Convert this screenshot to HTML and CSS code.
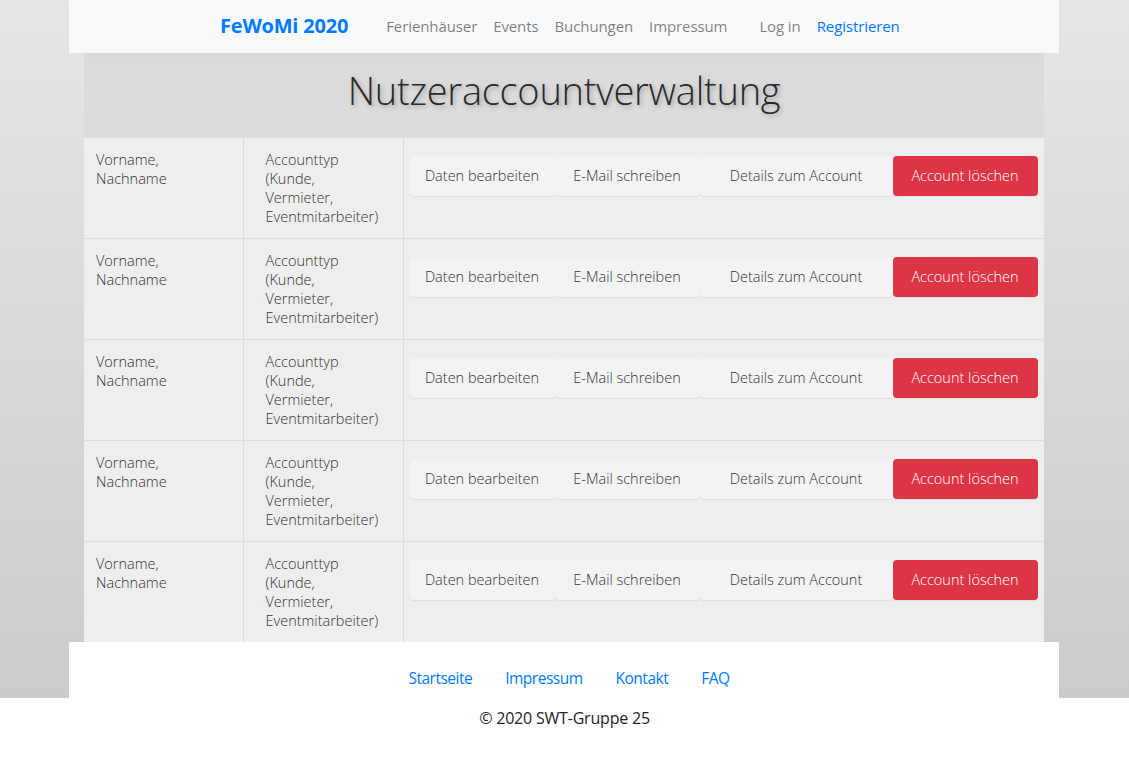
FILE: index.html
```html
<!DOCTYPE html>
<html lang="de">
<head>
<meta charset="utf-8">
<title>Nutzeraccountverwaltung</title>
<link rel="stylesheet" href="styles.css">
</head>
<body>
<div class="page">
  <nav class="navbar">
    <a class="brand" href="#">FeWoMi 2020</a>
    <ul class="nav-main">
      <li><a href="#">Ferienhäuser</a></li>
      <li><a href="#">Events</a></li>
      <li><a href="#">Buchungen</a></li>
      <li><a href="#">Impressum</a></li>
    </ul>
    <ul class="nav-user">
      <li><a href="#">Log in</a></li>
      <li><a class="active" href="#">Registrieren</a></li>
    </ul>
  </nav>
  <main class="container">
    <header class="jumbo"><h1>Nutzeraccountverwaltung</h1></header>
    <table class="accounts">
      <colgroup><col class="c-name"><col class="c-type"><col class="c-actions"></colgroup>
      <tbody>
        <tr>
          <td class="name">Vorname,<br>Nachname</td>
          <td class="type">Accounttyp<br>(Kunde,<br>Vermieter,<br>Eventmitarbeiter)</td>
          <td class="actions"><div class="btns"><button class="btn">Daten bearbeiten</button><button class="btn">E-Mail schreiben</button><button class="btn">Details zum Account</button><button class="btn danger">Account löschen</button></div></td>
        </tr>
        <tr>
          <td class="name">Vorname,<br>Nachname</td>
          <td class="type">Accounttyp<br>(Kunde,<br>Vermieter,<br>Eventmitarbeiter)</td>
          <td class="actions"><div class="btns"><button class="btn">Daten bearbeiten</button><button class="btn">E-Mail schreiben</button><button class="btn">Details zum Account</button><button class="btn danger">Account löschen</button></div></td>
        </tr>
        <tr>
          <td class="name">Vorname,<br>Nachname</td>
          <td class="type">Accounttyp<br>(Kunde,<br>Vermieter,<br>Eventmitarbeiter)</td>
          <td class="actions"><div class="btns"><button class="btn">Daten bearbeiten</button><button class="btn">E-Mail schreiben</button><button class="btn">Details zum Account</button><button class="btn danger">Account löschen</button></div></td>
        </tr>
        <tr>
          <td class="name">Vorname,<br>Nachname</td>
          <td class="type">Accounttyp<br>(Kunde,<br>Vermieter,<br>Eventmitarbeiter)</td>
          <td class="actions"><div class="btns"><button class="btn">Daten bearbeiten</button><button class="btn">E-Mail schreiben</button><button class="btn">Details zum Account</button><button class="btn danger">Account löschen</button></div></td>
        </tr>
        <tr>
          <td class="name">Vorname,<br>Nachname</td>
          <td class="type">Accounttyp<br>(Kunde,<br>Vermieter,<br>Eventmitarbeiter)</td>
          <td class="actions"><div class="btns"><button class="btn">Daten bearbeiten</button><button class="btn">E-Mail schreiben</button><button class="btn">Details zum Account</button><button class="btn danger">Account löschen</button></div></td>
        </tr>
      </tbody>
    </table>
  </main>
  <footer class="footer">
    <a href="#">Startseite</a>
    <a href="#">Impressum</a>
    <a href="#">Kontakt</a>
    <a href="#">FAQ</a>
  </footer>
</div>
<p class="copyright">© 2020 SWT-Gruppe 25</p>
</body>
</html>
```
FILE: styles.css
```css
* { box-sizing: border-box; }
html, body { margin: 0; padding: 0; background: #ffffff; }
body {
  font-family: "Open Sans", "Noto Sans", sans-serif;
  color: #212529;
}
a { text-decoration: none; }

.page {
  background: linear-gradient(180deg, #e6e6e6 0%, #cbcbcb 100%);
  padding-right: 1px;
}

/* navbar */
.navbar {
  width: 990px;
  height: 53px;
  margin: 0 auto;
  background: #f8f9fa;
  display: flex;
  align-items: center;
  padding-left: 151px;
  padding-bottom: 2px;
}
.brand {
  font-weight: 700;
  font-size: 20px;
  color: #007bff;
  margin-right: 30px;
  letter-spacing: -0.2px;
}
.navbar ul {
  list-style: none;
  margin: 0;
  padding: 0;
  display: flex;
}
.navbar li a {
  display: block;
  padding: 0 8px;
  font-size: 15px;
  font-weight: 400;
  letter-spacing: -0.1px;
  color: rgba(0, 0, 0, 0.5);
}
.navbar .nav-user { margin-left: 16px; }
.navbar li a.active { color: #007bff; }

/* content */
.container {
  width: 960px;
  margin: 0 auto;
}
.jumbo {
  height: 84px;
  background: linear-gradient(180deg, #dadada, #dcdcdc);
  display: flex;
  align-items: center;
  justify-content: center;
}
.jumbo h1 {
  margin: 0;
  font-weight: 300;
  font-size: 38px;
  letter-spacing: -0.25px;
  color: #2a2a2a;
  text-shadow: 2px 2px 4px rgba(0, 0, 0, 0.25);
  padding-bottom: 10px;
}

.accounts {
  width: 960px;
  border-collapse: collapse;
  background: #eeeeee;
  table-layout: fixed;
}
.c-name { width: 159px; }
.c-type { width: 160px; }
.c-actions { width: 641px; }
.accounts td {
  border-top: 1px solid #dcdcdc;
  vertical-align: top;
  padding: 12px;
  font-size: 14.5px;
  font-weight: 300;
  line-height: 19px;
  color: #333333;
  height: 101px;
}
.accounts tr:last-child td { height: 100px; }
.accounts td + td { border-left: 1px solid #dcdcdc; }
.accounts td.type { padding-left: 22px; }
.accounts td.actions { padding-left: 6px; padding-right: 6px; }

.btns {
  margin-top: 6px;
  display: grid;
  grid-template-columns: 145px 145px 193px 145px;
}
.btn {
  height: 40px;
  border: none;
  border-radius: 4px;
  background: #f3f3f3;
  box-shadow: 0 1px 1px rgba(0, 0, 0, 0.06);
  font-family: "Open Sans", "Noto Sans", sans-serif;
  font-weight: 300;
  font-size: 14.5px;
  color: #333333;
  padding: 0 0 2px;
  cursor: pointer;
}
.btn.danger {
  background: #dc3545;
  color: #ffffff;
}

/* footer */
.footer {
  width: 990px;
  height: 56px;
  margin: 0 auto;
  background: #ffffff;
  display: flex;
  justify-content: center;
  gap: 33px;
  padding-top: 26px;
  line-height: 20px;
  padding-left: 10px;
}
.footer a {
  color: #007bff;
  font-size: 15.5px;
  letter-spacing: -0.5px;
}
.copyright {
  margin: 10px 0 0;
  text-align: center;
  font-size: 16px;
  line-height: 20px;
  letter-spacing: -0.2px;
  color: #212529;
}
```
